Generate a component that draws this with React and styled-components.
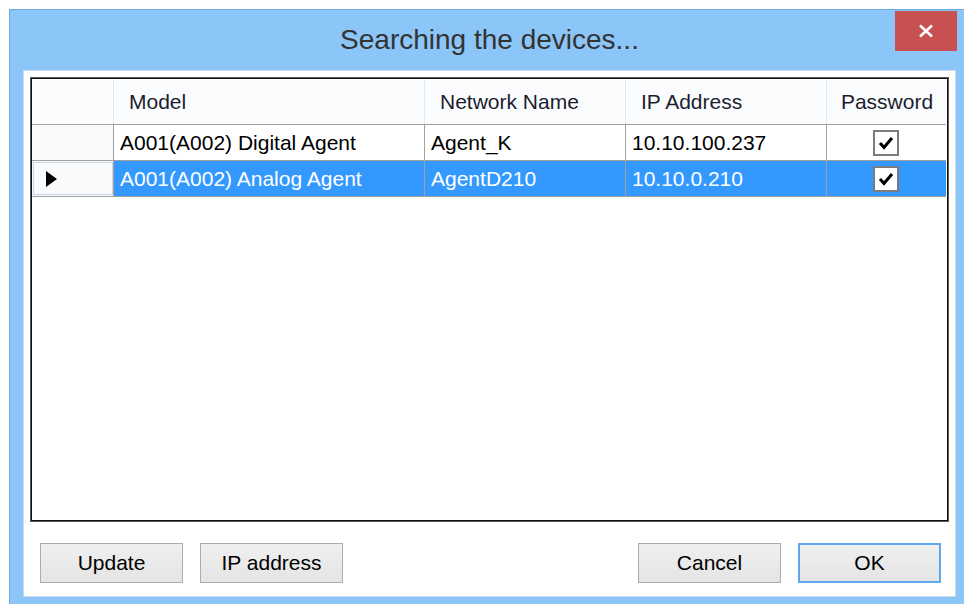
import styled, { createGlobalStyle } from "styled-components";

const GlobalStyle = createGlobalStyle`
  html, body {
    margin: 0;
    padding: 0;
    background: #ffffff;
    overflow: hidden;
  }
  body {
    font-family: "Liberation Sans", Arial, sans-serif;
  }
`;

const COLUMNS = "82px 311px 201px 201px 120px";

const devices = [
  { model: "A001(A002) Digital Agent", name: "Agent_K", ip: "10.10.100.237", password: true },
  { model: "A001(A002) Analog Agent", name: "AgentD210", ip: "10.10.0.210", password: true },
];

export default function App() {
  const selected = 1;

  return (
    <>
      <GlobalStyle />
      <Window>
        <TitleBar>
          <span />
          <Title>Searching the devices...</Title>
          <CloseButton>
            <svg width="16" height="14" viewBox="0 0 16 14">
              <path d="M2 1.5 L14 12.5 M14 1.5 L2 12.5" stroke="#fff" strokeWidth="2.6" />
            </svg>
          </CloseButton>
        </TitleBar>

        <Client>
          <Grid>
            <HeaderRow>
              <HeaderCell />
              <HeaderCell>Model</HeaderCell>
              <HeaderCell>Network Name</HeaderCell>
              <HeaderCell>IP Address</HeaderCell>
              <HeaderCell $center $last>Password</HeaderCell>
            </HeaderRow>

            {devices.map((d, i) => (
              <Row key={d.ip} $selected={i === selected}>
                <RowHeader $current={i === selected}>
                  {i === selected && (
                    <svg width="11" height="16" viewBox="0 0 11 16">
                      <polygon points="0,0 11,8 0,16" fill="#000" />
                    </svg>
                  )}
                </RowHeader>
                <Cell>{d.model}</Cell>
                <Cell>{d.name}</Cell>
                <Cell>{d.ip}</Cell>
                <Cell $center $last>
                  <CheckBox>
                    {d.password && (
                      <svg width="16" height="14" viewBox="0 0 16 14">
                        <path d="M2 7 L6 11.5 L14 2" fill="none" stroke="#000" strokeWidth="3" />
                      </svg>
                    )}
                  </CheckBox>
                </Cell>
              </Row>
            ))}
          </Grid>

          <ButtonBar>
            <ButtonGroup>
              <Button>Update</Button>
              <Button>IP address</Button>
            </ButtonGroup>
            <ButtonGroup>
              <Button>Cancel</Button>
              <Button $default>OK</Button>
            </ButtonGroup>
          </ButtonBar>
        </Client>
      </Window>
    </>
  );
}

/* STYLES */
const Window = styled.div`
  margin: 9px 0 0 9px;
  width: 955px;
  height: 595px;
  box-sizing: border-box;
  padding: 0 8px 7px 13px;

  background: #8cc5f7;
  border-left: 1px solid #6fa9df;
  border-top: 1px solid #6fa9df;

  display: flex;
  flex-direction: column;
`;

const TitleBar = styled.div`
  height: 60px;
  display: grid;
  grid-template-columns: 1fr auto 1fr;
  align-items: start;
`;

const Title = styled.div`
  align-self: center;
  margin-top: -1px;
  font-size: 28px;
  color: #333333;
  white-space: nowrap;
`;

const CloseButton = styled.div`
  justify-self: end;
  margin: 1px -1px 0 0;
  width: 62px;
  height: 40px;

  background: #c75050;

  display: flex;
  align-items: center;
  justify-content: center;
`;

const Client = styled.div`
  flex: 1;
  box-sizing: border-box;
  padding: 6px 6px 0 6px;

  background: #ffffff;
  border: 1px solid #c9dcee;

  display: flex;
  flex-direction: column;
`;

const Grid = styled.div`
  width: 919px;
  height: 445px;
  box-sizing: border-box;

  background: #ffffff;
  border: 1px solid #5a5a5a;
  box-shadow: inset 0 0 0 1px #111111;
  padding: 2px 2px 0 1px;
`;

const HeaderRow = styled.div`
  display: grid;
  grid-template-columns: ${COLUMNS};
  height: 45px;
  box-sizing: border-box;
  border-bottom: 1px solid #a0a0a0;
  background: #fbfcfd;
`;

const HeaderCell = styled.div`
  display: flex;
  align-items: center;
  justify-content: ${p => (p.$center ? "center" : "flex-start")};
  padding-left: ${p => (p.$center ? "0" : "15px")};
  border-right: ${p => (p.$last ? "none" : "1px solid #e4e9ef")};

  font-size: 21px;
  color: #1c1c30;
  white-space: nowrap;
`;

const Row = styled.div`
  display: grid;
  grid-template-columns: ${COLUMNS};
  height: 36px;
  box-sizing: border-box;
  border-bottom: 1px solid #a0a0a0;

  background: ${p => (p.$selected ? "#3399ff" : "#ffffff")};
  color: ${p => (p.$selected ? "#ffffff" : "#000000")};
`;

const RowHeader = styled.div`
  box-sizing: border-box;
  background: #f9fafb;
  border-right: 1px solid #a0a0a0;
  outline: ${p => (p.$current ? "1px solid #cbd6e2" : "none")};
  outline-offset: -2px;

  display: flex;
  align-items: center;
  padding-left: 14px;
`;

const Cell = styled.div`
  display: flex;
  align-items: center;
  justify-content: ${p => (p.$center ? "center" : "flex-start")};
  padding-left: ${p => (p.$center ? "0" : "6px")};
  border-right: ${p => (p.$last ? "none" : "1px solid #a0a0a0")};

  font-size: 21px;
  white-space: nowrap;
`;

const CheckBox = styled.div`
  width: 22px;
  height: 22px;
  margin-left: -2px;

  background: #ffffff;
  border: 2px solid #7c7c7c;

  display: flex;
  align-items: center;
  justify-content: center;
`;

const ButtonBar = styled.div`
  margin-top: 21px;
  padding: 0 8px 0 10px;

  display: flex;
  justify-content: space-between;
`;

const ButtonGroup = styled.div`
  display: flex;
  gap: 17px;
`;

const Button = styled.div`
  width: 143px;
  height: 40px;
  box-sizing: border-box;

  background: linear-gradient(#f0f0f0, #e4e4e4);
  border: ${p => (p.$default ? "2px solid #5ea8f2" : "1px solid #acacac")};

  display: flex;
  align-items: center;
  justify-content: center;

  font-size: 21px;
  color: #000000;
`;
